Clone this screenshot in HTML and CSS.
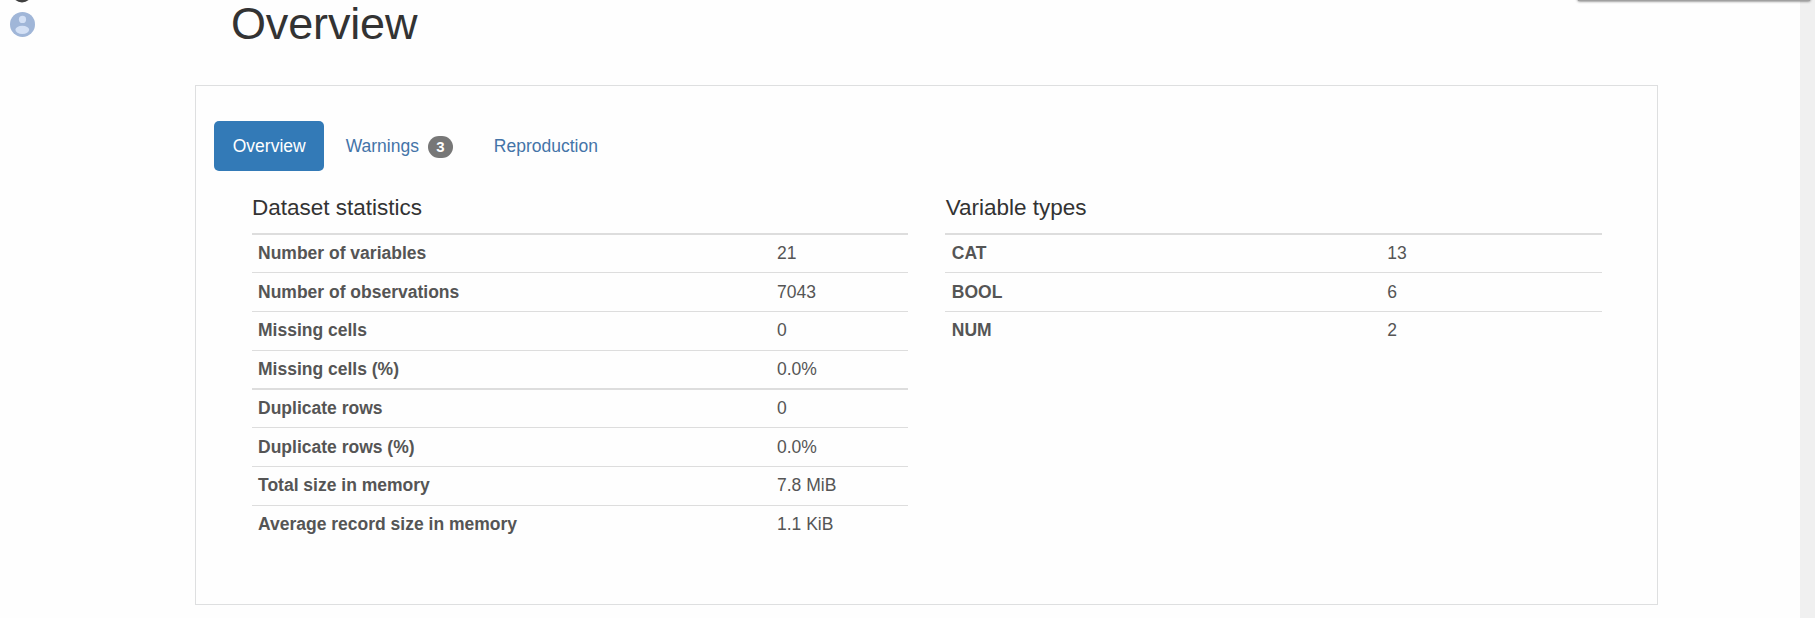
FILE: index.html
```
<!DOCTYPE html>
<html lang="en">
<head>
<meta charset="utf-8">
<title>Overview</title>
<link rel="stylesheet" href="styles.css">
</head>
<body>
<div class="page">
  <aside class="rail">
    <svg class="rail-icons" width="45" height="45" viewBox="0 0 45 45">
      <circle cx="22" cy="-7.5" r="10" fill="#404040"/>
      <circle cx="22.5" cy="24.4" r="12.5" fill="#a0b6d8"/>
      <circle cx="22.5" cy="19.4" r="3.6" fill="#d3e0f5"/>
      <ellipse cx="22.3" cy="29.8" rx="6.9" ry="4.1" fill="#d3e0f5"/>
    </svg>
  </aside>
  <main class="content">
    <h1 class="title">Overview</h1>
    <section class="panel">
      <nav class="tabs">
        <a class="tab tab-active">Overview</a>
        <a class="tab">Warnings <span class="badge">3</span></a>
        <a class="tab">Reproduction</a>
      </nav>
      <div class="columns">
        <section class="column">
          <h4 class="heading">Dataset statistics</h4>
          <dl class="stats">
            <div class="row row-strong"><dt>Number of variables</dt><dd>21</dd></div>
            <div class="row"><dt>Number of observations</dt><dd>7043</dd></div>
            <div class="row"><dt>Missing cells</dt><dd>0</dd></div>
            <div class="row"><dt>Missing cells (%)</dt><dd>0.0%</dd></div>
            <div class="row row-strong"><dt>Duplicate rows</dt><dd>0</dd></div>
            <div class="row"><dt>Duplicate rows (%)</dt><dd>0.0%</dd></div>
            <div class="row"><dt>Total size in memory</dt><dd>7.8 MiB</dd></div>
            <div class="row"><dt>Average record size in memory</dt><dd>1.1 KiB</dd></div>
          </dl>
        </section>
        <section class="column">
          <h4 class="heading heading-types">Variable types</h4>
          <dl class="stats stats-types">
            <div class="row row-strong"><dt>CAT</dt><dd>13</dd></div>
            <div class="row"><dt>BOOL</dt><dd>6</dd></div>
            <div class="row"><dt>NUM</dt><dd>2</dd></div>
          </dl>
        </section>
      </div>
    </section>
  </main>
  <div class="scroll-track"></div>
</div>
<div class="toolbar-edge"></div>
</body>
</html>
```
FILE: styles.css
```
* { box-sizing: border-box; }

body {
  margin: 0;
  background: #fefefe;
  color: #333;
  font-family: "Liberation Sans", Arial, sans-serif;
  font-size: 17.5px;
  line-height: 25px;
  overflow: hidden;
}

.page { display: flex; height: 618px; }
.rail { width: 195px; }
.rail-icons { display: block; }
.content { width: 1463px; }
.scroll-track { width: 15px; margin-left: auto; background: #f0f0f0; }

/* lower edge of the floating toolbar above the view */
.toolbar-edge {
  position: absolute;
  top: -8px;
  left: 1578px;
  width: 232px;
  height: 9px;
  background: #a0a0a0;
  box-shadow: 0 0 3px rgba(0, 0, 0, .75);
}

.title {
  height: 85px;
  margin: 0;
  padding-left: 36px;
  font-size: 45px;
  font-weight: 400;
  letter-spacing: -0.15px;
  line-height: 47px;
}

.panel {
  height: 520px;
  padding: 35px 18px 0;
  border: 1px solid #dedfe0;
}

.tabs { display: flex; gap: 2.5px; }
.tab {
  height: 50px;
  padding: 12.5px 18.75px;
  border-radius: 5px;
  color: #4474a8;
  white-space: nowrap;
}
.tab-active { background: #337ab7; color: #fff; }

.badge {
  display: inline-block;
  width: 25px;
  margin: 0 1px 0 4px;
  padding: 3.5px 0;
  border-radius: 12.5px;
  background: #777;
  color: #fff;
  font-size: 15px;
  font-weight: 700;
  line-height: 15px;
  text-align: center;
  vertical-align: middle;
}

.columns {
  display: grid;
  grid-template-columns: 656px 657px;
  gap: 37px;
  padding: 23px 0 0 38px;
}

.heading {
  height: 39.25px;
  margin: 0;
  font-size: 22.5px;
  font-weight: 400;
  line-height: 27px;
}
.heading-types { padding-left: 0.7px; }

.stats { margin: 0; color: #555; }
.row {
  display: grid;
  grid-template-columns: 519px 1fr;
  height: 38.75px;
  padding: 6.5px 6px 0;
  border-top: 1px solid #ddd;
}
.row-strong { padding-top: 5.5px; border-top-width: 2px; }
.stats-types .row { grid-template-columns: 435.5px 1fr; padding-left: 6.8px; }
.row dt { font-weight: 700; }
.row dd { margin: 0; }
```
